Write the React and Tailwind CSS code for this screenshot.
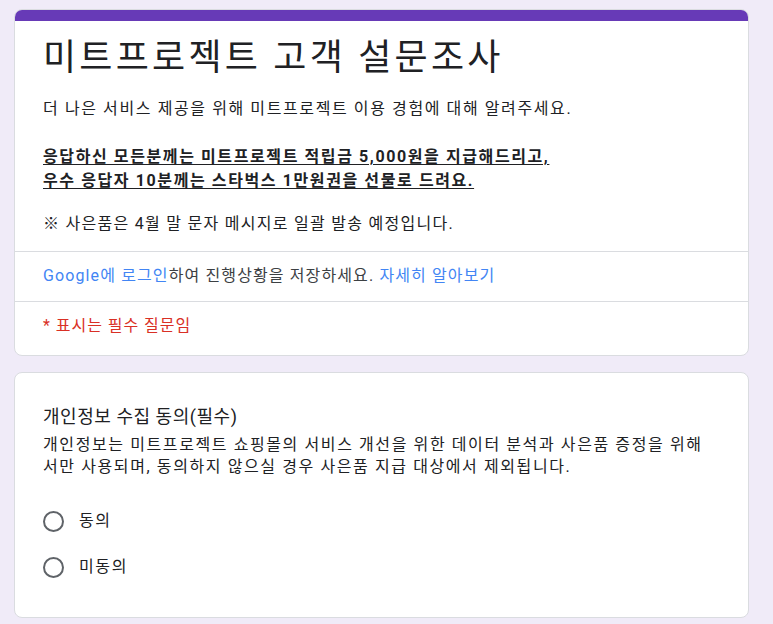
import React from "react";

const font = { fontFamily: "Roboto, 'Noto Sans CJK KR', sans-serif" };

function Radio({ label }) {
  return (
    <label className="flex items-center h-[46px] cursor-pointer">
      <span className="w-[21px] h-[21px] rounded-full border-2 border-[#5f6368] mr-[15px]" />
      <span className="text-[16px] tracking-[0.1em] text-[#202124]">{label}</span>
    </label>
  );
}

export default function App() {
  return (
    <div className="min-h-screen bg-[#f0ebf8] pt-[9px] pl-[14px] pb-6" style={font}>
      <div className="w-[735px] bg-white rounded-lg border border-[#dadce0] overflow-hidden">
        <div className="h-[11px] bg-[#673ab7]" />
        <div className="px-[28px] pt-[14px] pb-[15px] border-b border-[#dadce0]">
          <h1 className="text-[36px] leading-[46px] tracking-[0.09em] text-[#202124]">미트프로젝트 고객 설문조사</h1>
          <div className="mt-[16px] text-[16px] leading-[24px] tracking-[0.1em] text-[#202124]">
            <p>더 나은 서비스 제공을 위해 미트프로젝트 이용 경험에 대해 알려주세요.</p>
            <p className="mt-[24px] font-bold underline underline-offset-2">
              응답하신 모든분께는 미트프로젝트 적립금 5,000원을 지급해드리고,
              <br />
              우수 응답자 10분께는 스타벅스 1만원권을 선물로 드려요.
            </p>
            <p className="mt-[19px] tracking-[0.08em]">※ 사은품은 4월 말 문자 메시지로 일괄 발송 예정입니다.</p>
          </div>
        </div>
        <div className="px-[28px] pt-[12px] pb-[13px] text-[16px] leading-[24px] tracking-[0.07em] text-[#3c4043] border-b border-[#dadce0]">
          <span className="text-[#4285f4]">Google에 로그인</span>하여 진행상황을 저장하세요.{" "}
          <span className="text-[#4285f4]">자세히 알아보기</span>
        </div>
        <div className="px-[28px] pt-[12px] pb-[17px] text-[16px] leading-[24px] tracking-[0.06em] text-[#d93025]">
          * 표시는 필수 질문임
        </div>
      </div>

      <div className="mt-[16px] w-[735px] bg-white rounded-lg border border-[#dadce0] px-[28px] pt-[32px] pb-[27px]">
        <h2 className="text-[18px] leading-[24px] tracking-[0.03em] text-[#202124]">개인정보 수집 동의(필수)</h2>
        <p className="mt-[5px] text-[16px] leading-[22px] tracking-[0.1em] text-[#202124]">
          개인정보는 미트프로젝트 쇼핑몰의 서비스 개선을 위한 데이터 분석과 사은품 증정을 위해
          <br />
          서만 사용되며, 동의하지 않으실 경우 사은품 지급 대상에서 제외됩니다.
        </p>
        <div className="mt-[20px]">
          <Radio label="동의" />
          <Radio label="미동의" />
        </div>
      </div>
    </div>
  );
}
